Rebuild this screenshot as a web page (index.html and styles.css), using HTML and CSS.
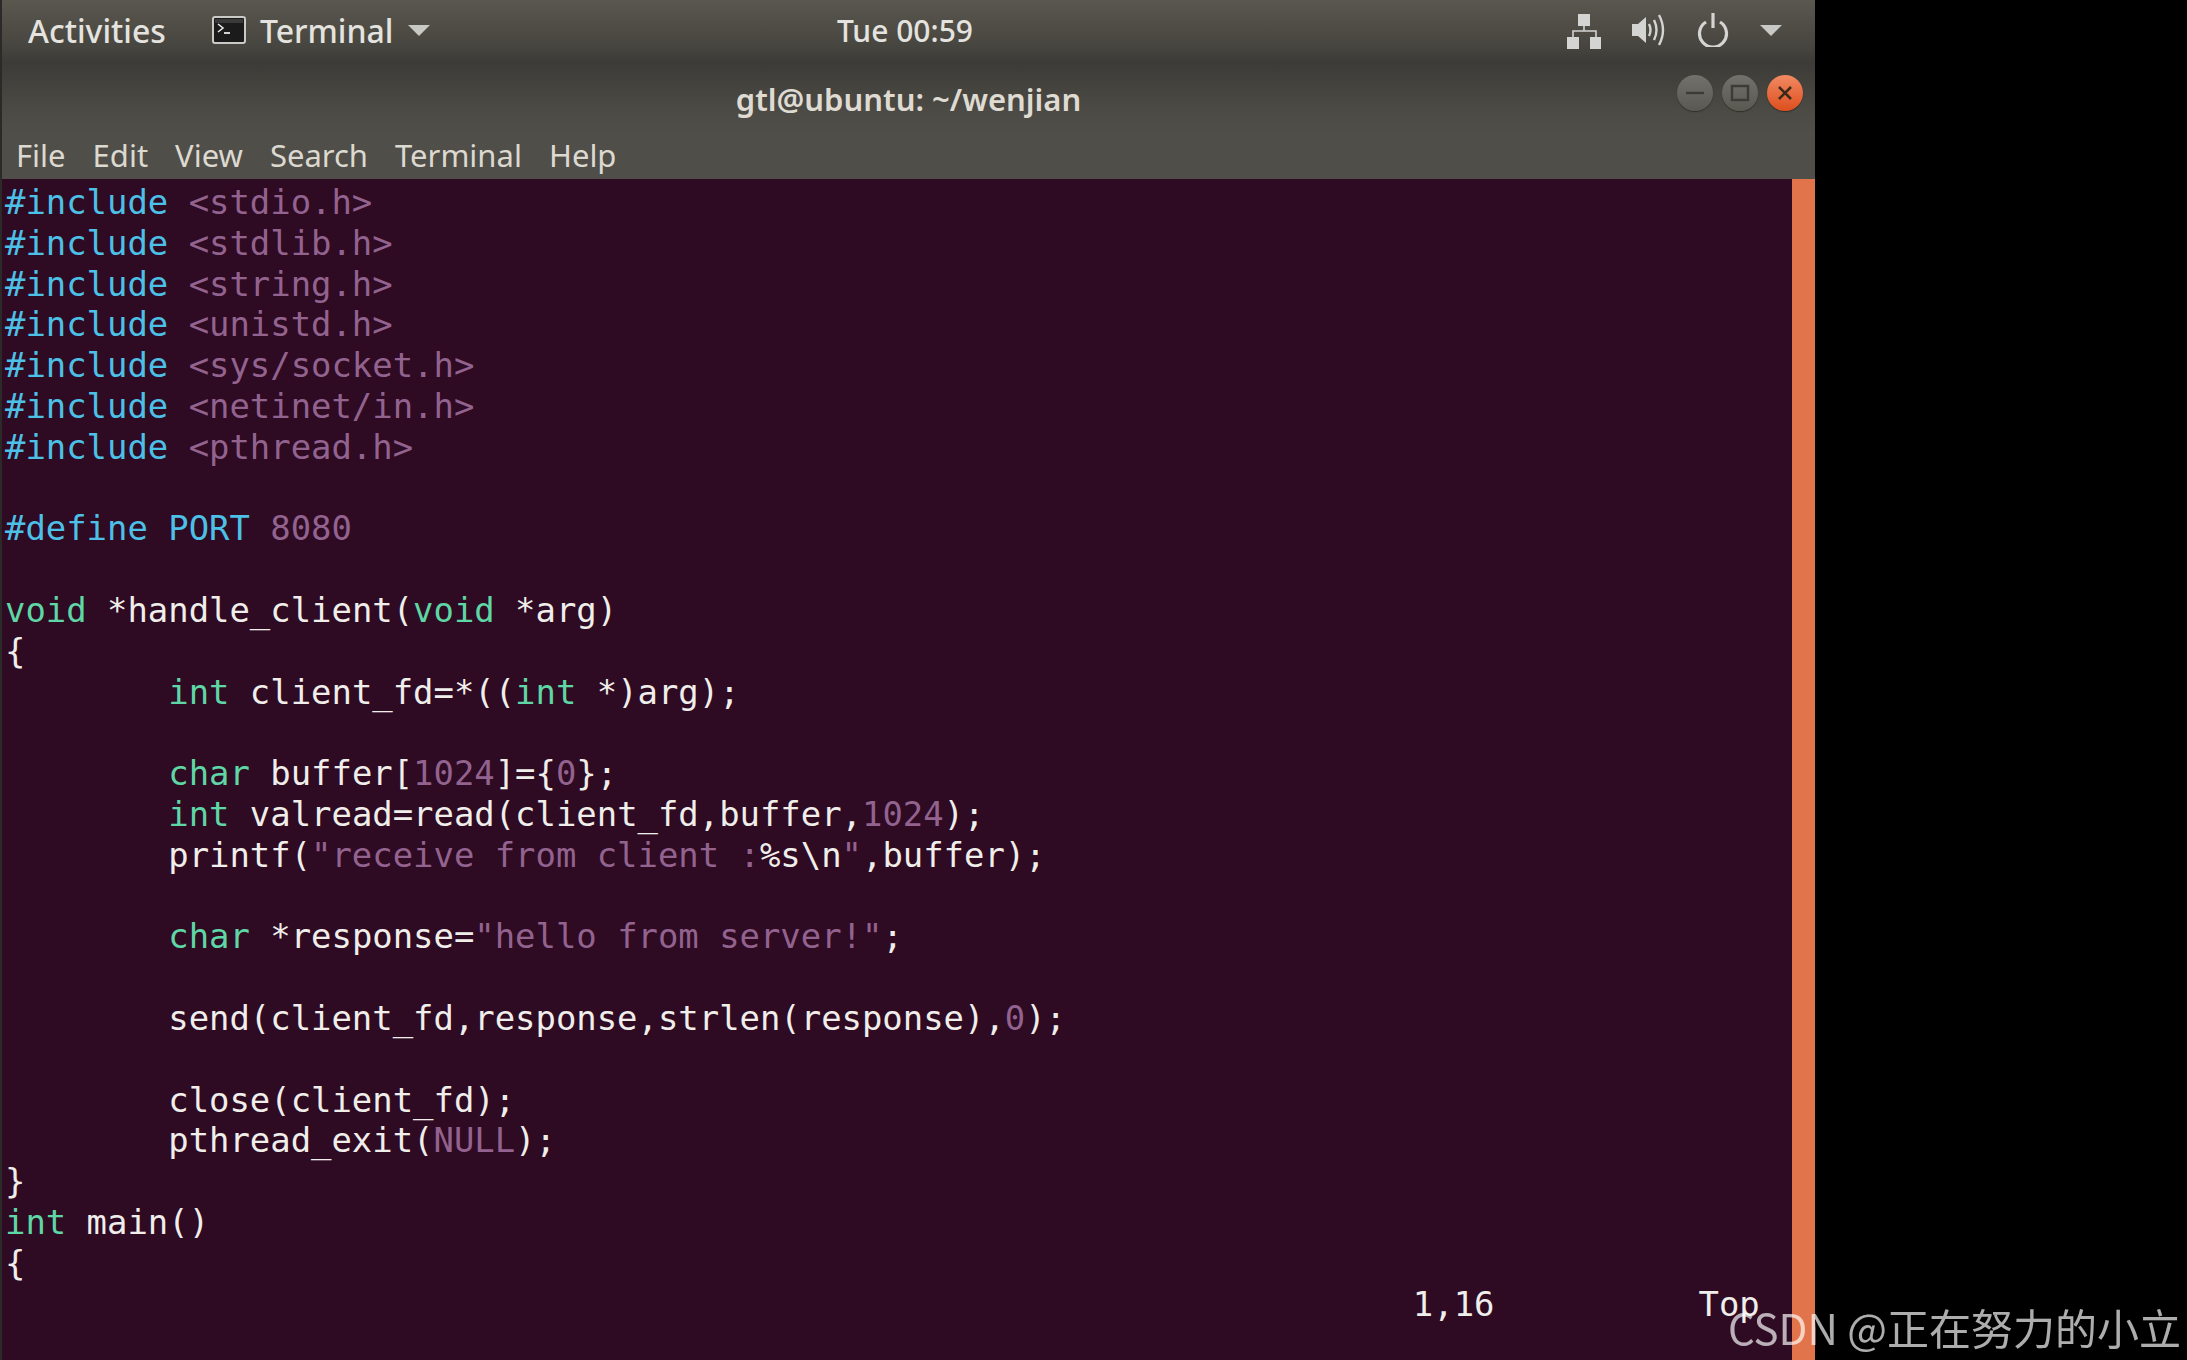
FILE: index.html
```html
<!DOCTYPE html>
<html lang="en">
<head>
<meta charset="utf-8">
<title>Terminal</title>
<link rel="stylesheet" href="styles.css">
</head>
<body>
<div class="desktop">
  <div class="window">
    <header class="topbar">
      <div class="top-left">
        <span class="activities">Activities</span>
        <span class="app">
          <svg class="term-icon" viewBox="0 0 34 28"><rect x="1" y="1" width="32" height="26" rx="2" fill="#1b1b1b" stroke="#c9c9c6" stroke-width="2"/><rect x="3" y="3" width="28" height="4" fill="#3a3a3a"/><path d="M6 8l5 4-5 4" fill="none" stroke="#e8e8e8" stroke-width="1.6"/><path d="M12 17h6" stroke="#e8e8e8" stroke-width="1.8"/></svg>
          <span class="app-name">Terminal</span>
          <svg class="caret" viewBox="0 0 22 11"><path d="M0 0h22L11 11z" fill="#c8c8c5"/></svg>
        </span>
      </div>
      <span class="clock">Tue 00:59</span>
      <div class="tray">
        <svg class="i-net" viewBox="0 0 34 35"><g fill="#d4d4d2"><rect x="11" y="0" width="12" height="12"/><rect x="0" y="23" width="12" height="12"/><rect x="23" y="23" width="11" height="12"/></g><path d="M17 12v5M6 23v-6h23v6" fill="none" stroke="#d4d4d2" stroke-width="1.6"/></svg>
        <svg class="i-vol" viewBox="0 0 34 32"><path d="M0 10h6l8-7v26l-8-7H0z" fill="#d4d4d2"/><path d="M17 10q3 6 0 12M22 6q5 10 0 20M27 1q8 15 0 30" fill="none" stroke="#d4d4d2" stroke-width="2.4"/></svg>
        <svg class="i-pow" viewBox="0 0 32 34"><path d="M9 9a13.5 13.5 0 1 0 14 0" fill="none" stroke="#d4d4d2" stroke-width="3.2"/><path d="M16 0v15" stroke="#d4d4d2" stroke-width="3.2"/></svg>
        <svg class="caret" viewBox="0 0 22 11"><path d="M0 0h22L11 11z" fill="#c8c8c5"/></svg>
      </div>
    </header>
    <div class="titlebar">
      <span class="title">gtl@ubuntu: ~/wenjian</span>
      <div class="buttons">
        <span class="btn"><svg viewBox="0 0 36 36"><path d="M9 18h18" stroke="#3c3b37" stroke-width="2.4"/></svg></span>
        <span class="btn"><svg viewBox="0 0 36 36"><rect x="10" y="11" width="16" height="14" fill="none" stroke="#3c3b37" stroke-width="2.4"/></svg></span>
        <span class="btn btn-close"><svg viewBox="0 0 36 36"><path d="M12 12l12 12M24 12L12 24" stroke="#3a2a1a" stroke-width="2.6"/></svg></span>
      </div>
    </div>
    <nav class="menubar">
      <span>File</span><span>Edit</span><span>View</span><span>Search</span><span>Terminal</span><span>Help</span>
    </nav>
    <div class="term">
<pre class="code"><span class="pp">#include</span> <span class="ct">&lt;stdio.h&gt;</span>
<span class="pp">#include</span> <span class="ct">&lt;stdlib.h&gt;</span>
<span class="pp">#include</span> <span class="ct">&lt;string.h&gt;</span>
<span class="pp">#include</span> <span class="ct">&lt;unistd.h&gt;</span>
<span class="pp">#include</span> <span class="ct">&lt;sys/socket.h&gt;</span>
<span class="pp">#include</span> <span class="ct">&lt;netinet/in.h&gt;</span>
<span class="pp">#include</span> <span class="ct">&lt;pthread.h&gt;</span>

<span class="pp">#define PORT</span> <span class="ct">8080</span>

<span class="ty">void</span> *handle_client(<span class="ty">void</span> *arg)
{
        <span class="ty">int</span> client_fd=*((<span class="ty">int</span> *)arg);

        <span class="ty">char</span> buffer[<span class="ct">1024</span>]={<span class="ct">0</span>};
        <span class="ty">int</span> valread=read(client_fd,buffer,<span class="ct">1024</span>);
        printf(<span class="ct">"receive from client :</span>%s\n<span class="ct">"</span>,buffer);

        <span class="ty">char</span> *response=<span class="ct">"hello from server!"</span>;

        send(client_fd,response,strlen(response),<span class="ct">0</span>);

        close(client_fd);
        pthread_exit(<span class="ct">NULL</span>);
}
<span class="ty">int</span> main()
{
                                                                     1,16          Top</pre>
      <div class="scrollbar"></div>
    </div>
  </div>
  <div class="watermark">CSDN @正在努力的小立</div>
</div>
</body>
</html>
```
FILE: styles.css
```css
* { box-sizing: border-box; }
html, body { margin: 0; height: 100%; background: #000; }
.desktop { position: relative; width: 2187px; height: 1360px; overflow: hidden; background: #000; }
.window {
  width: 1815px; height: 1360px; display: flex; flex-direction: column;
  border-left: 2px solid #2a2a28; filter: blur(0.5px);
  font-family: "Noto Sans", sans-serif; font-size: 32px; color: #e6e4de;
}
.topbar {
  height: 62px; flex: none; display: grid; grid-template-columns: 1fr auto 1fr; align-items: center;
  background: linear-gradient(#5a574f, #47453f 75%, #3c3b37);
  padding: 0 33px 2px 26px; font-weight: 500; color: #e4e3df;
}
.top-left { display: flex; align-items: center; gap: 46px; }
.app { display: flex; align-items: center; gap: 14px; }
.term-icon { width: 34px; height: 28px; }
.caret { width: 22px; height: 11px; margin-left: 0; }
.clock { font-size: 30px; }
.tray { display: flex; align-items: center; justify-content: flex-end; gap: 31px; }
.i-net { width: 34px; height: 35px; margin-top: 2px; }
.i-vol { width: 34px; height: 32px; }
.i-pow { width: 32px; height: 34px; }
.titlebar {
  height: 73px; flex: none; display: grid; grid-template-columns: 1fr; align-items: center; justify-items: center;
  position: relative; background: linear-gradient(#3c3b37, #4d4b45 70%, #504e48);
}
.title { font-weight: 600; font-size: 31px; color: #dfdbd2; }
.buttons { position: absolute; right: 12px; top: 13px; display: flex; gap: 9px; }
.btn { width: 36px; height: 36px; border-radius: 50%; background: linear-gradient(#72716c, #595851); box-shadow: 0 1px 1px #2f2e2a; }
.btn svg { display: block; width: 36px; height: 36px; }
.btn-close { background: linear-gradient(#f28a63, #dd4e1d); }
.menubar {
  height: 44px; flex: none; display: flex; align-items: center; gap: 27px; padding: 0 0 4px 14px;
  background: #504e48; color: #dcd9d1; font-size: 31px;
}
.term { flex: 1; display: flex; min-height: 0; background: #2e0a23; }
.code {
  flex: 1; margin: 0; padding: 4px 0 0 3px; overflow: hidden;
  font-family: "DejaVu Sans Mono", "Liberation Mono", monospace; font-size: 33.9px; line-height: 40.8px;
  color: #f0eeea;
}
.pp { color: #4cc0e6; }
.ct { color: #93638f; }
.ty { color: #5ed6a5; }
.scrollbar { width: 23px; flex: none; background: #e2744b; }
.watermark {
  position: absolute; right: 6px; bottom: 5px;
  font-family: "Noto Sans CJK SC", "Liberation Sans", sans-serif; font-size: 42px; line-height: 56px;
  color: rgba(255,255,255,.68); white-space: nowrap;
}
```
